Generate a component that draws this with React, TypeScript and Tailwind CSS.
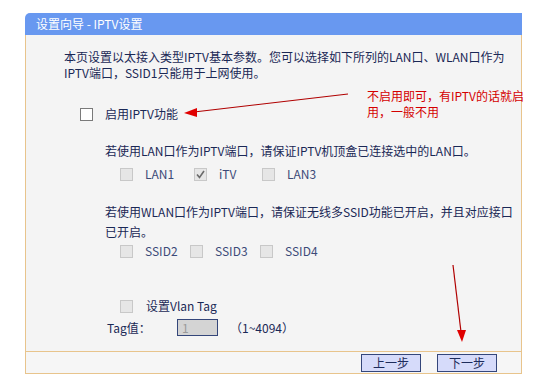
import React from "react";

const Box: React.FC<{ on?: boolean; off?: boolean }> = ({ on, off }) => {
  if (!off) {
    return (
      <span className="inline-block w-[13px] h-[13px] shrink-0 border border-[#7a7a7a] bg-white" />
    );
  }
  return (
    <span className="relative inline-block w-[13px] h-[13px] shrink-0 border border-[#c8c8c8] bg-[#e6e6e6]">
      {on && (
        <svg viewBox="0 0 13 13" className="absolute -left-px -top-px w-[13px] h-[13px]">
          <path d="M3 6.5 L5.5 9.5 L10 3" fill="none" stroke="#6a6a6a" strokeWidth="1.6" />
        </svg>
      )}
    </span>
  );
};

const Item: React.FC<{ label: string; w: string; on?: boolean }> = ({ label, w, on }) => (
  <div className={`flex items-center ${w}`}>
    <Box off on={on} />
    <span className="ml-[12px] text-[#3c4a78]">{label}</span>
  </div>
);

const StepButton: React.FC<{ label: string }> = ({ label }) => (
  <button className="h-[18px] w-[60px] border border-[#34467a] bg-[#d6dbfa] text-[12px] leading-[16px] text-[#1d2c5c]">
    {label}
  </button>
);

export default function App() {
  return (
    <div className="relative w-[540px] h-[384px] bg-white pt-[13px] pl-[25px] text-[12px] text-[#1a2856] font-['Noto_Sans_CJK_SC',sans-serif]">
      <div className="w-[497px]">
        <div className="h-[22px] rounded-tl-[5px] bg-[#6898f0] pl-[11px] leading-[22px] text-white">
          设置向导 - IPTV设置
        </div>

        <div className="h-[316px] border-x border-[#e8c48c] bg-[#f4f4f4] pt-[14px]">
          <p className="pl-[38px] leading-[16px]">
            本页设置以太接入类型IPTV基本参数。您可以选择如下所列的LAN口、WLAN口作为
            <br />
            IPTV端口，SSID1只能用于上网使用。
          </p>

          <div className="mt-[25px] flex h-[16px] items-center pl-[54px]">
            <Box />
            <span className="ml-[12px]">启用IPTV功能</span>
          </div>

          <p className="mt-[21px] h-[16px] pl-[79px] leading-[16px]">
            若使用LAN口作为IPTV端口，请保证IPTV机顶盒已连接选中的LAN口。
          </p>

          <div className="mt-[7px] flex h-[16px] items-center pl-[94px]">
            <Item label="LAN1" w="w-[74px]" />
            <Item label="iTV" w="w-[68px]" on />
            <Item label="LAN3" w="w-[70px]" />
          </div>

          <p className="mt-[20px] pl-[79px] leading-[20px]">
            若使用WLAN口作为IPTV端口，请保证无线多SSID功能已开启，并且对应接口
            <br />
            已开启。
          </p>

          <div className="mt-px flex h-[16px] items-center pl-[94px]">
            <Item label="SSID2" w="w-[70px]" />
            <Item label="SSID3" w="w-[70px]" />
            <Item label="SSID4" w="w-[70px]" />
          </div>

          <div className="mt-[39px] flex h-[16px] items-center pl-[94px]">
            <Box off />
            <span className="ml-[13px]">设置Vlan Tag</span>
          </div>

          <div className="mt-[5px] flex h-[17px] items-center pl-[81px]">
            <span className="w-[70px]">Tag值：</span>
            <span className="flex h-[17px] w-[41px] items-center border border-[#34467a] bg-[#d4d4d4] pl-[4px] text-[#9a9a9a]">
              1
            </span>
            <span className="ml-[12px]">（1~4094）</span>
          </div>
        </div>

        <div className="flex h-[23px] items-center justify-end gap-[16px] border border-[#e8c48c] bg-[#f6f6f6] pr-[24px]">
          <StepButton label="上一步" />
          <StepButton label="下一步" />
        </div>
      </div>

      <div className="absolute left-[367px] top-[88px] flex flex-col leading-[16px] text-[#d40000]">
        <span>不启用即可，有IPTV的话就启</span>
        <span>用，一般不用</span>
      </div>

      <svg className="pointer-events-none absolute left-0 top-0" width="540" height="384">
        <line x1="348" y1="94" x2="194" y2="112" stroke="#b00000" strokeWidth="1.2" />
        <polygon points="184,113 197,108 197,117" fill="#e00000" />
        <line x1="453" y1="265" x2="461" y2="332" stroke="#b00000" strokeWidth="1.2" />
        <polygon points="462,342 457,330 466,330" fill="#e00000" />
      </svg>
    </div>
  );
}
